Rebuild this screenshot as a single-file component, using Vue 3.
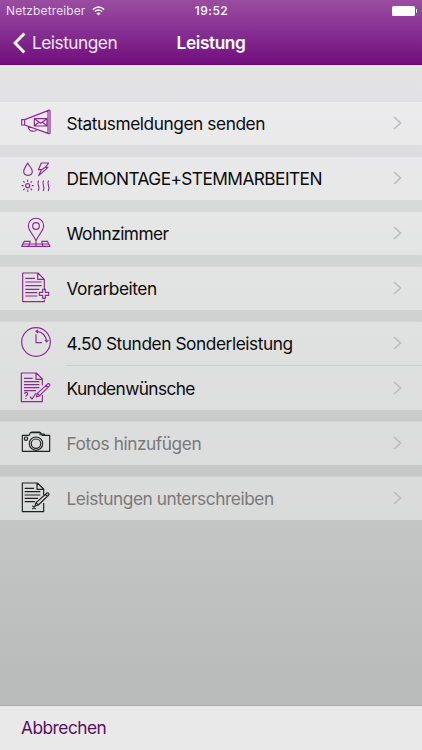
<script setup>
const groups = [
  [{ label: 'Statusmeldungen senden', icon: 'megaphone' }],
  [{ label: 'DEMONTAGE+STEMMARBEITEN', icon: 'trades', fit: 'tight' }],
  [{ label: 'Wohnzimmer', icon: 'place', fit: 'tight' }],
  [{ label: 'Vorarbeiten', icon: 'docAdd' }],
  [
    { label: '4.50 Stunden Sonderleistung', icon: 'clock' },
    { label: 'Kundenwünsche', icon: 'wishes', fit: 'tighter' },
  ],
  [{ label: 'Fotos hinzufügen', icon: 'camera', muted: true }],
  [{ label: 'Leistungen unterschreiben', icon: 'sign', muted: true }],
]
</script>

<template>
  <div class="screen">
    <header class="top">
      <div class="status">
        <div class="carrier">
          <span>Netzbetreiber</span>
          <svg class="wifi" viewBox="0 0 13 10">
            <path d="M.8 3.5Q6.5-1.5 12.2 3.5M2.8 5.6Q6.5 2.5 10.2 5.6" />
            <path class="dot" d="M4.4 7.3Q6.5 5.7 8.6 7.3L6.5 9.4Z" />
          </svg>
        </div>
        <span class="time">19:52</span>
        <div class="battery"><i class="cell"></i><i class="tip"></i></div>
      </div>
      <nav class="nav">
        <div class="back">
          <svg class="back-arrow" viewBox="0 0 13 22"><path d="M11.4 1.5 2 11l9.4 9.5" /></svg>
          <span>Leistungen</span>
        </div>
        <h1 class="title">Leistung</h1>
      </nav>
    </header>

    <main class="list">
      <section v-for="(rows, g) in groups" :key="g" class="group">
        <div v-for="row in rows" :key="row.label" class="row" :class="{ muted: row.muted }">
          <svg class="icon" viewBox="30 33 96 96">
            <g v-if="row.icon === 'megaphone'">
              <path d="M35 74h9l70-27c1-2 5-2 6 0v68c-1 2-5 2-6 0L44 90h-9ZM44 74v16M114 47v68M55 95c1 16 22 17 25 8" />
              <path d="M73 71h38v22H73ZM73 71l19 14 19-14M73 93l14-12M111 93 97 81" />
            </g>
            <g v-else-if="row.icon === 'trades'">
              <path d="M53 39C48 49 41 56 41 64c0 16 26 16 26 0 0-8-9-15-14-25ZM94 39h22l-10 13h8L86 77l8-18h-9ZM106 52 94 59" />
              <circle cx="53" cy="107" r="6" />
              <path d="M53 89v6M53 119v6M35 107h6M65 107h6M40 94l4 4M62 116l4 4M66 94l-4 4M44 116l-4 4M86 92c-9 10 7 16-1 31M101 92c-9 10 7 16-1 31M116 92c-9 10 7 16-1 31" />
            </g>
            <g v-else-if="row.icon === 'place'">
              <circle cx="78" cy="63" r="10" />
              <path d="M78 108C74 94 55 77 55 63c0-31 46-31 46 0 0 14-19 31-23 45ZM62 109H43l-8 15h85l-8-15H94M39 117h77M61 109l-5 15M78 110v14M95 109l4 15" />
            </g>
            <g v-else-if="row.icon === 'docAdd'">
              <path d="M103 91V58L84 39H38v86h65v-6M83 40v18h19M46 55h29M46 66h49M46 77h49M46 88h42M46 98h36M46 108h36" />
              <path d="M98 88h8v9h10v9h-10v9h-8v-9H88v-9h10Z" />
            </g>
            <g v-else-if="row.icon === 'clock'">
              <circle cx="78" cy="81" r="43" />
              <path d="M78 58v25h18M80 49c17 1 29 14 30 31M84 45l-6 4 6 5M105 75l5 6 5-6" />
            </g>
            <g v-else-if="row.icon === 'wishes'">
              <path d="M97 76V57L79 39H34v86h63v-20M78 40v18h18M42 55h26M42 65h46M42 74h46M42 83h46M42 92h36" />
              <path d="m79 111 3-11 32-29c4-1 7 3 5 6l-30 30ZM82 100l7 7M108 76l6 6M60 110l6 7 12-18M44 102c0-7 10-6 9 0-1 4-5 4-5 8M48 114v3" />
            </g>
            <g v-else-if="row.icon === 'camera'">
              <path d="M37 61h20l4-8h31l4 8h23v48H37ZM90 61v-4h13v4M65 53v-2h24v2" />
              <circle cx="78" cy="86" r="20" />
              <circle cx="78" cy="86" r="14" />
              <circle cx="48" cy="71" r="5" />
            </g>
            <g v-else>
              <path d="M101 76V57L82 39H37v86h64V99M81 40v18h19M44 55h28M44 65h47M44 75h47M44 85h40M44 95h31" />
              <path d="m75 108 3-10 33-29c4-2 8 3 5 6l-31 30ZM78 98l7 7M106 73l6 6M67 107l10 10M77 107l-10 10" />
            </g>
          </svg>
          <div class="body">
            <span class="label" :class="row.fit">{{ row.label }}</span>
            <svg class="chevron" viewBox="0 0 9 14"><path d="m1 1 6.5 6L1 13" /></svg>
          </div>
        </div>
      </section>
    </main>

    <footer class="toolbar"><span class="cancel">Abbrechen</span></footer>
  </div>
</template>

<style>
body { margin: 0; }
</style>

<style scoped>
.screen {
  width: 422px;
  height: 750px;
  display: flex;
  flex-direction: column;
  overflow: hidden;
  font-family: Inter, "Liberation Sans", sans-serif;
  background: linear-gradient(#e4e3e5 65px, #dddddf 150px, #d5d7d6 240px, #cccecd 370px, #c4c6c5 520px, #b8bab9 705px);
}
.top {
  height: 65px;
  box-sizing: border-box;
  color: #fff;
  background: linear-gradient(#9a4d9f, #873295 45%, #720f7c);
  border-bottom: 1px solid #65106e;
}
.status {
  height: 21px;
  padding: 0 5px 0 6px;
  display: grid;
  grid-template-columns: 1fr auto 1fr;
  align-items: center;
  font-size: 12px;
}
.carrier { display: flex; align-items: center; gap: 6px; color: #eddff0; letter-spacing: 0.12px; }
.wifi { width: 13px; height: 10px; fill: none; stroke: #fff; stroke-width: 1.5; }
.wifi .dot { fill: #fff; stroke: none; }
.time { font-weight: 500; letter-spacing: 0.5px; }
.battery { display: flex; justify-content: flex-end; align-items: center; gap: 1px; }
.cell { width: 23px; height: 10px; border-radius: 1.5px; background: #fff; }
.tip { width: 1px; height: 4px; border-radius: 0 1px 1px 0; background: #fff; }
.nav {
  height: 43px;
  padding: 0 13px;
  display: grid;
  grid-template-columns: 1fr auto 1fr;
  align-items: center;
}
.back { display: flex; align-items: center; gap: 6px; font-size: 17.3px; letter-spacing: -0.5px; color: #f2e7f4; }
.back-arrow { width: 13px; height: 22px; fill: none; stroke: #fff; stroke-width: 3; }
.title { margin: 0; font-size: 17.3px; font-weight: 600; letter-spacing: -0.4px; }
.list {
  flex: 1;
  padding-top: 36px;
  display: flex;
  flex-direction: column;
  gap: 11px;
}
.group { background: rgba(255, 255, 255, 0.36); box-shadow: inset 0 1px rgba(0, 0, 0, 0.05); }
.row { height: 44px; display: flex; align-items: center; padding-left: 20px; color: #0b0b0c; }
.row + .row { height: 45px; }
.icon {
  width: 32px;
  height: 32px;
  flex: none;
  margin-bottom: 2px;
  fill: none;
  stroke: #8b2a93;
  stroke-width: 3.5;
  stroke-linejoin: round;
}
.body {
  flex: 1;
  height: 100%;
  box-sizing: border-box;
  margin-left: 14.5px;
  padding-right: 20px;
  display: flex;
  align-items: center;
  justify-content: space-between;
}
.row + .row .body { border-top: 1px solid #cecfcd; }
.label { font-size: 17.3px; letter-spacing: -0.43px; white-space: nowrap; }
.label.tight { letter-spacing: -0.56px; }
.label.tighter { letter-spacing: -0.61px; }
.muted .label { color: #79797a; }
.muted .icon { stroke: #202121; }
.chevron { width: 9px; height: 14px; fill: none; stroke: #bdbdc1; stroke-width: 1.7; }
.toolbar {
  height: 45px;
  box-sizing: border-box;
  padding: 0 0 2px 21px;
  display: flex;
  align-items: center;
  border-top: 1px solid #a8aaa9;
  background: #e9e9e9;
  color: #55105f;
}
.cancel { font-size: 17.3px; letter-spacing: -0.5px; }
</style>
